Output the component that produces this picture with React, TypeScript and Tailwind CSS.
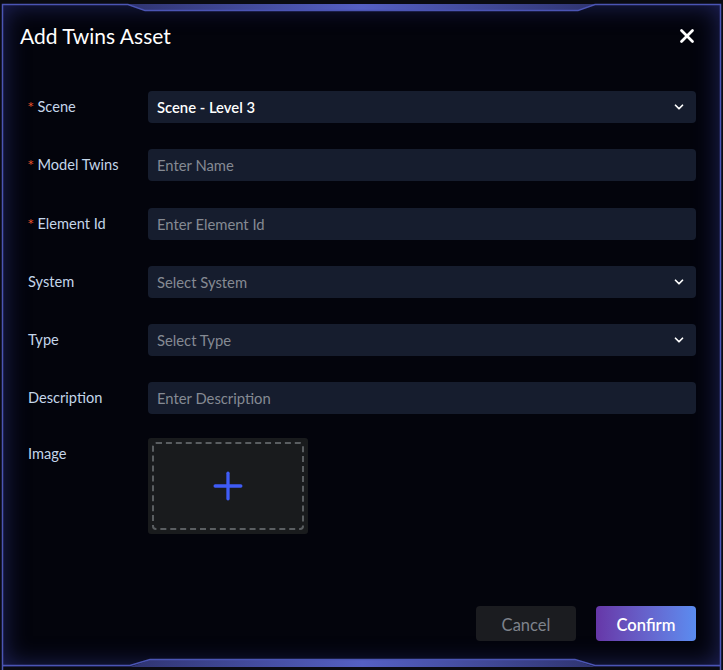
import { ChevronDown, X, Plus } from "lucide-react"

const font = { fontFamily: "Lato, 'Noto Sans', sans-serif" }

type Row = {
  label: string
  required?: boolean
  placeholder: string
  value?: string
  select?: boolean
  mt: string
}

const rows: Row[] = [
  { label: "Scene", required: true, placeholder: "", value: "Scene - Level 3", select: true, mt: "mt-0" },
  { label: "Model Twins", required: true, placeholder: "Enter Name", mt: "mt-[26px]" },
  { label: "Element Id", required: true, placeholder: "Enter Element Id", mt: "mt-[27px]" },
  { label: "System", placeholder: "Select System", select: true, mt: "mt-[26px]" },
  { label: "Type", placeholder: "Select Type", select: true, mt: "mt-[26px]" },
  { label: "Description", placeholder: "Enter Description", mt: "mt-[26px]" },
]

function FrameBorder() {
  return (
    <svg className="pointer-events-none absolute left-0 top-0" width="723" height="670" viewBox="0 0 723 670">
      <defs>
        <linearGradient id="band" x1="0" x2="1" y1="0" y2="0">
          <stop offset="0" stopColor="#2f3470" />
          <stop offset="0.5" stopColor="#5560c4" />
          <stop offset="1" stopColor="#2f3470" />
        </linearGradient>
      </defs>
      {/* top band */}
      <path d="M128 4 L595 4 L578 10 L145 10 Z" fill="url(#band)" />
      <path d="M2.5 670 L2.5 4.5 L128 4.5 L145 10.5 L578 10.5 L595 4.5 L720.5 4.5 L720.5 670" fill="none" stroke="#4b55b4" strokeWidth="1.5" />
      {/* bottom band */}
      <path d="M130 667 L150 660 L575 660 L595 667 Z" fill="url(#band)" />
      <path d="M2.5 665.5 L130 665.5 L150 659.5 L575 659.5 L595 665.5 L720.5 665.5" fill="none" stroke="#4b55b4" strokeWidth="1.5" />
    </svg>
  )
}

export default function App() {
  return (
    <div className="relative h-[670px] w-[723px] overflow-hidden bg-[#0a0b12] px-[2px] pt-[4px]" style={font}>
      <div className="flex h-[663px] flex-col bg-[#03040c] shadow-[inset_0_0_26px_rgba(58,66,170,0.55)]">
        <div className="flex items-center justify-between pl-[18px] pr-[23px] pt-[18px]">
          <h2 className="text-[21px] leading-[28px] text-white">Add Twins Asset</h2>
          <X size={22} strokeWidth={3} className="text-white" />
        </div>

        <div className="flex flex-1 flex-col pl-[26px] pr-[25px] pt-[41px]">
          {rows.map((r) => (
            <div key={r.label} className={`flex items-start ${r.mt}`}>
              <div className="flex h-[32px] w-[120px] shrink-0 items-center text-[14.6px] text-[#c4d6ea]">
                {r.required ? (
                  <span className="mr-[4px] mt-[1px] font-['DejaVu_Sans',sans-serif] text-[11px] text-[#f0562c]">*</span>
                ) : null}
                {r.label}
              </div>
              <div className="flex h-[32px] flex-1 items-center justify-between rounded-[4px] bg-[#161d2e] pl-[9px] pr-[10px] text-[14.8px]">
                {r.value ? (
                  <span className="font-semibold text-white">{r.value}</span>
                ) : (
                  <span className="text-[#858a93]">{r.placeholder}</span>
                )}
                {r.select ? <ChevronDown size={14} strokeWidth={3} className="text-white" /> : null}
              </div>
            </div>
          ))}

          <div className="mt-[24px] flex items-start">
            <div className="flex h-[32px] w-[120px] shrink-0 items-center text-[14.6px] text-[#c4d6ea]">Image</div>
            <div className="flex h-[96px] w-[160px] items-center justify-center rounded-[3px] bg-[#191b1d] p-[4px]">
              <div className="flex h-full w-full items-center justify-center rounded-[4px] border-2 border-dashed border-[#5a5e61]">
                <Plus size={44} strokeWidth={1.8} className="text-[#3f5cf6]" />
              </div>
            </div>
          </div>

          <div className="flex flex-1 items-end justify-end gap-[20px] pb-[26px]">
            <button className="h-[35px] w-[100px] rounded-[4px] bg-[#1b1c20] pt-[3px] text-[16.5px] text-[#7e828b]">Cancel</button>
            <button className="h-[35px] w-[100px] rounded-[4px] bg-gradient-to-r from-[#6637a8] to-[#5a8cf0] pt-[3px] text-[16.5px] font-semibold text-white">
              Confirm
            </button>
          </div>
        </div>
      </div>
      <FrameBorder />
    </div>
  )
}
